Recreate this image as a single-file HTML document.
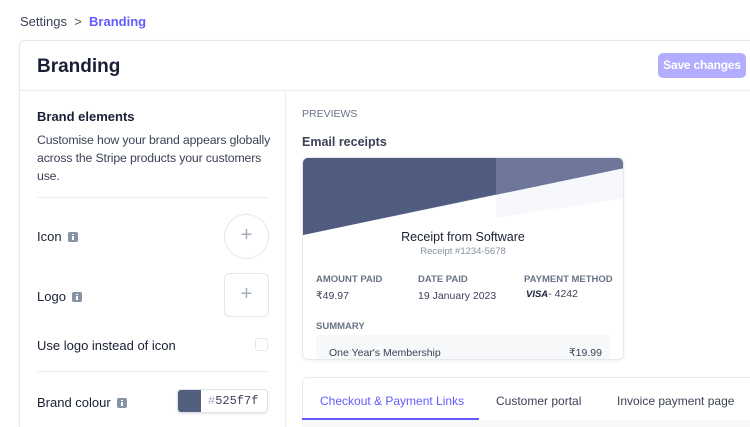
<!DOCTYPE html>
<html><head><style>
*{box-sizing:border-box;margin:0;padding:0}
html,body{width:750px;height:427px;overflow:hidden}
body{background:#fff;font-family:"Liberation Sans",sans-serif;color:#1a1f36;position:relative}
.a{position:absolute}
.info{display:inline-block;width:10px;height:10px;background:#8792a2;border-radius:2px;vertical-align:-1px;margin-left:6px;position:relative}
.info:after{content:"";position:absolute;left:4px;top:4px;width:2px;height:4px;background:#fff}
.info:before{content:"";position:absolute;left:4px;top:2px;width:2px;height:1px;background:#fff}
.lbl{font-size:12px;color:#697386;font-weight:bold}
</style></head><body>
<div class="a" style="left:20px;top:14px;font-size:13px;color:#3c4257">Settings &nbsp;<span style="color:#555">&gt;</span>&nbsp; <b style="color:#635bff">Branding</b></div>
<div class="a" style="left:19px;top:40px;width:731px;height:387px;border:1px solid #e6e8ec;border-right:none;border-bottom:none;border-radius:6px 0 0 0;box-shadow:0 1px 3px rgba(0,0,0,.05)"></div>
<div class="a" style="left:37px;top:56px;font-size:19px;font-weight:bold">Branding</div>
<div class="a" style="left:658px;top:53px;width:88px;height:25px;background:#b3adff;border-radius:5px;color:#fff;font-size:12px;font-weight:bold;line-height:25px;text-align:center;letter-spacing:-0.2px">Save changes</div>
<div class="a" style="left:20px;top:90px;width:730px;height:1px;background:#ebeef1"></div>
<div class="a" style="left:285px;top:91px;width:1px;height:336px;background:#ebeef1"></div>
<div class="a" style="left:37px;top:109px;font-size:13px;font-weight:bold;color:#1a1f36">Brand elements</div>
<div class="a" style="left:37px;top:131px;width:240px;font-size:12.3px;line-height:18px;color:#3c4257;letter-spacing:-0.15px">Customise how your brand appears globally across the Stripe products your customers use.</div>
<div class="a" style="left:37px;top:197px;width:231px;height:1px;background:#ebeef1"></div>
<div class="a" style="left:37px;top:229px;font-size:13px">Icon<span class="info"></span></div>
<div class="a" style="left:224px;top:214px;width:45px;height:45px;border:1px solid #e3e6ea;border-radius:50%;color:#a3acb9;font-size:20px;text-align:center;line-height:41px">+</div>
<div class="a" style="left:37px;top:289px;font-size:13px">Logo<span class="info"></span></div>
<div class="a" style="left:224px;top:273px;width:45px;height:44px;border:1px solid #e3e6ea;border-radius:6px;color:#a3acb9;font-size:20px;text-align:center;line-height:40px">+</div>
<div class="a" style="left:37px;top:338px;font-size:13px">Use logo instead of icon</div>
<div class="a" style="left:255px;top:338px;width:13px;height:13px;border:1px solid #e3e6ea;border-radius:3px"></div>
<div class="a" style="left:37px;top:371px;width:231px;height:1px;background:#ebeef1"></div>
<div class="a" style="left:37px;top:395px;font-size:13px">Brand colour<span class="info"></span></div>
<div class="a" style="left:177px;top:389px;width:91px;height:24px;border:1px solid #dfe3e8;border-radius:4px;box-shadow:0 1px 2px rgba(0,0,0,.1);overflow:hidden">
<div style="position:absolute;left:0;top:0;width:23px;height:24px;background:#525f7f"></div>
<div style="position:absolute;left:30px;top:4px;font-family:'Liberation Mono',monospace;font-size:12px;color:#3c4257"><span style="color:#a3acb9">#</span>525f7f</div></div>
<div class="a" style="left:302px;top:108px;font-size:10.5px;color:#697386">PREVIEWS</div>
<div class="a" style="left:302px;top:135px;font-size:12.5px;font-weight:bold;color:#3c4257">Email receipts</div>
<div class="a" style="left:302px;top:157px;width:322px;height:203px;border:1px solid #e6e8ec;border-radius:6px;overflow:hidden;box-shadow:0 1px 3px rgba(0,0,0,.06)">
<svg width="322" height="203" style="position:absolute;left:0;top:0">
<polygon points="193,0 322,0 322,40 193,60" fill="#f7f8fc"/>
<polygon points="0,0 322,0 322,10 0,77" fill="#6e7799"/>
<polygon points="0,0 193,0 193,36 0,77" fill="#4f5b7f"/>
</svg>
<div style="position:absolute;left:0;width:320px;top:72px;text-align:center;font-size:12.5px;color:#1a1f36">Receipt from Software</div>
<div style="position:absolute;left:0;width:320px;top:88px;text-align:center;font-size:9.5px;color:#8792a2">Receipt #1234-5678</div>
<div class="lbl" style="position:absolute;left:13px;top:116px;font-size:9.5px">AMOUNT PAID</div>
<div class="lbl" style="position:absolute;left:115px;top:116px;font-size:9.5px">DATE PAID</div>
<div class="lbl" style="position:absolute;left:221px;top:116px;font-size:9.5px">PAYMENT METHOD</div>
<div style="position:absolute;left:13px;top:132px;font-size:10.5px;color:#3c4257">₹49.97</div>
<div style="position:absolute;left:115px;top:132px;font-size:10.5px;color:#3c4257">19 January 2023</div>
<div style="position:absolute;left:223px;top:130px;font-size:10.5px;color:#3c4257"><b style="font-style:italic;font-size:9.5px;color:#1a1f36">VISA</b>- 4242</div>
<div class="lbl" style="position:absolute;left:13px;top:163px;font-size:9.5px">SUMMARY</div>
<div style="position:absolute;left:13px;top:177px;width:294px;height:30px;background:#f6f8fa;border-radius:4px"></div>
<div style="position:absolute;left:26px;top:189px;font-size:10.5px;color:#3c4257">One Year's Membership</div>
<div style="position:absolute;left:266px;top:189px;font-size:10.5px;color:#3c4257">₹19.99</div>
</div>
<div class="a" style="left:302px;top:377px;width:448px;height:46px;border:1px solid #e6e8ec;border-right:none;border-radius:5px 0 0 0"></div>
<div class="a" style="left:302px;top:420px;width:448px;height:7px;background:#f6f8fa"></div>
<div class="a" style="left:302px;top:418px;width:177px;height:2px;background:#635bff"></div>
<div class="a" style="left:320px;top:394px;font-size:12px;color:#635bff">Checkout &amp; Payment Links</div>
<div class="a" style="left:496px;top:394px;font-size:12px;color:#3c4257">Customer portal</div>
<div class="a" style="left:617px;top:394px;font-size:12px;color:#3c4257">Invoice payment page</div>
</body></html>
